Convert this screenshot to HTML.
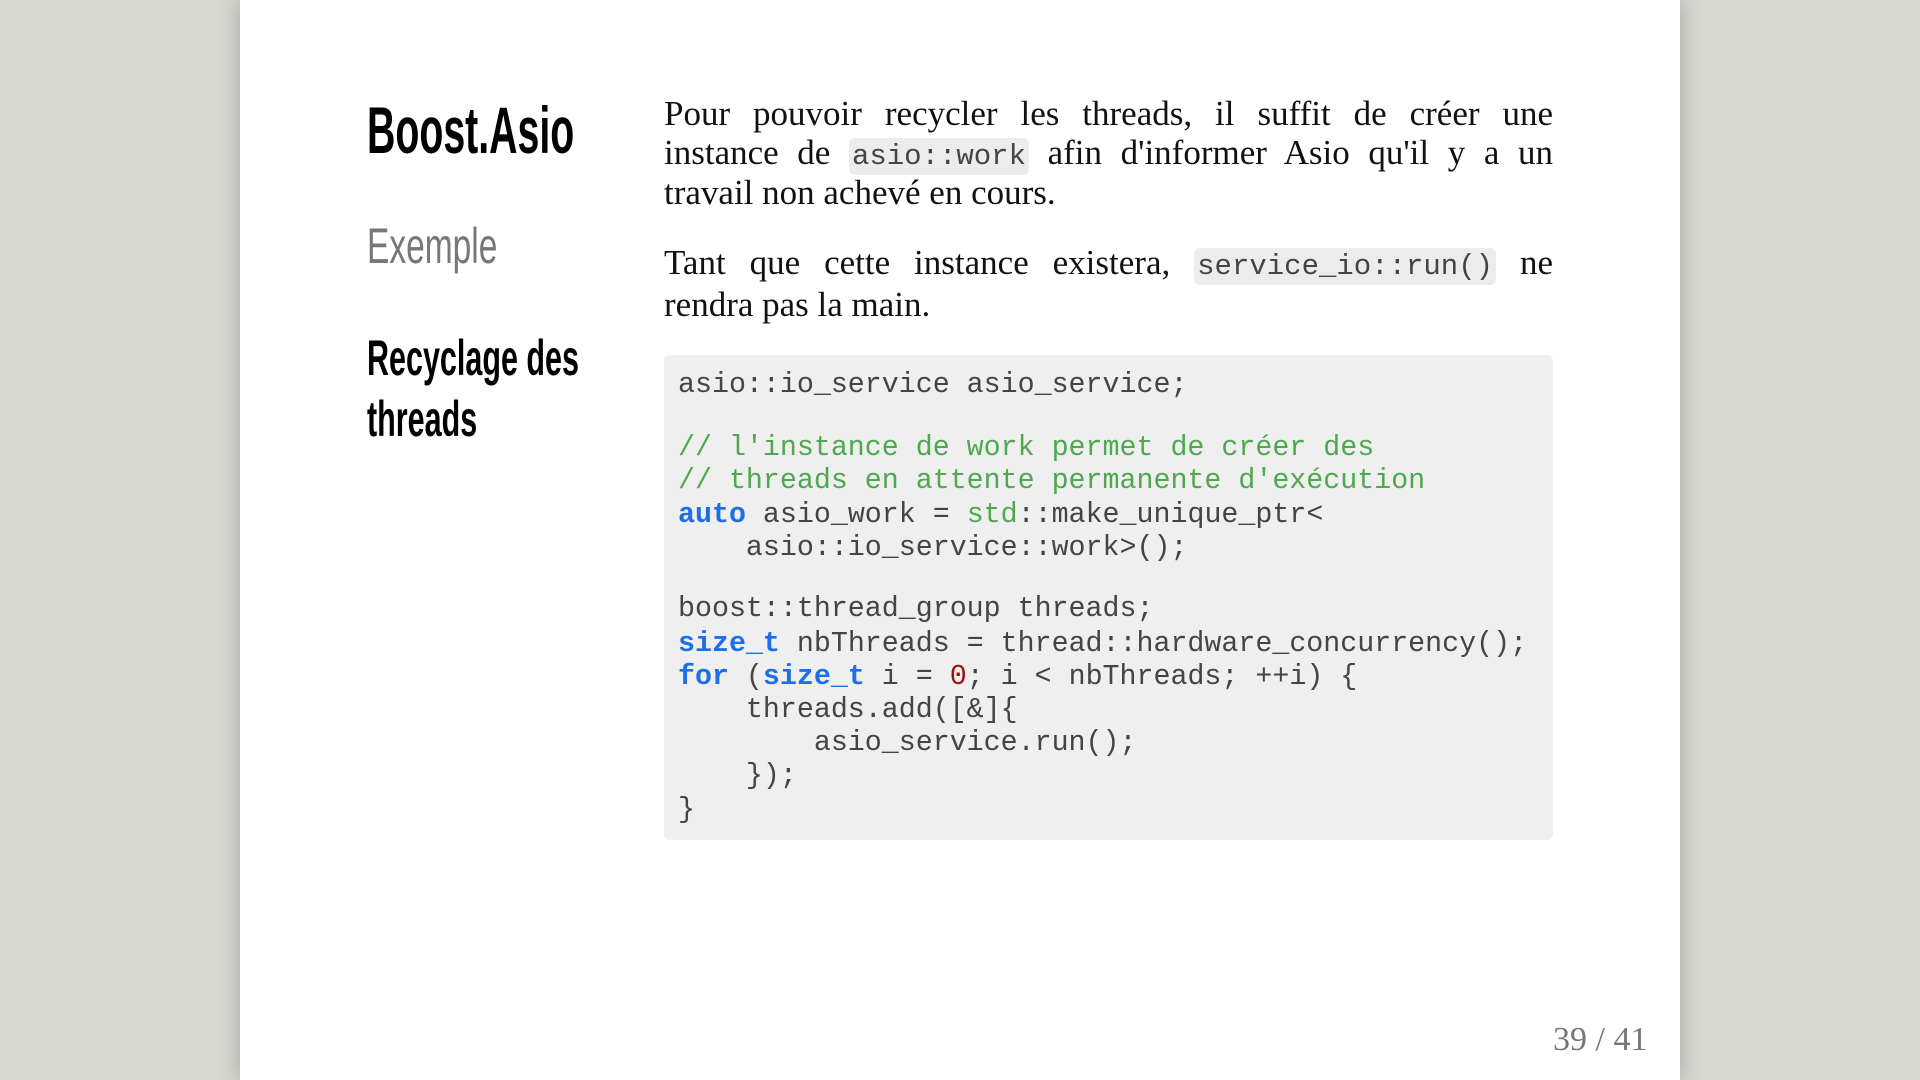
<!DOCTYPE html>
<html><head><meta charset="utf-8"><style>
html,body{margin:0;padding:0;width:1920px;height:1080px;overflow:hidden;background:#d7d8d2;}
.slide{position:absolute;left:240px;top:0;width:1440px;height:1080px;background:#fff;box-shadow:0 0 20px rgba(0,0,0,.25);}
.h{position:absolute;font-family:"Liberation Sans Narrow","Liberation Sans",sans-serif;transform-origin:left top;white-space:nowrap;}
.t{position:absolute;left:664px;width:889px;font-family:"Liberation Serif",serif;font-size:35px;color:#111;line-height:40px;white-space:nowrap;}
.j{text-align:justify;text-align-last:justify;white-space:normal;}
.ic{font-family:"Liberation Mono",monospace;font-size:29px;color:#444;background:#ececec;border-radius:6px;padding:2px 3px;}
.code{position:absolute;left:664px;top:355px;width:889px;height:485px;background:#efefef;border-radius:6px;}
.l{position:absolute;left:14px;font-family:"Liberation Mono",monospace;font-size:28.3px;color:#444;white-space:pre;line-height:34px;}
.c{color:#4ea84e}.k{color:#1d6fe8;font-weight:bold}.n{color:#a01010}
</style></head><body>
<div class="slide"></div>
<div class="h" style="left:367px;top:92px;font-size:66px;font-weight:bold;color:#000;transform:scaleX(0.595)">Boost.Asio</div>
<div class="h" style="left:367px;top:217px;font-size:50px;color:#777;transform:scaleX(0.67)">Exemple</div>
<div class="h" style="left:367px;top:328px;font-size:50px;font-weight:bold;color:#000;transform:scaleX(0.61);line-height:61px">Recyclage des<br>threads</div>

<div class="t j" style="top:94px">Pour pouvoir recycler les threads, il suffit de créer une</div>
<div class="t j" style="top:133px">instance de <span class="ic">asio::work</span> afin d'informer Asio qu'il y a un</div>
<div class="t" style="top:173px">travail non achevé en cours.</div>
<div class="t j" style="top:243px">Tant que cette instance existera, <span class="ic">service_io::run()</span> ne</div>
<div class="t" style="top:285px">rendra pas la main.</div>

<div class="code">
<div class="l" style="top:13px">asio::io_service asio_service;</div>
<div class="l" style="top:76px"><span class="c">// l'instance de work permet de créer des</span></div>
<div class="l" style="top:109px"><span class="c">// threads en attente permanente d'exécution</span></div>
<div class="l" style="top:143px"><span class="k">auto</span> asio_work = <span class="c">std</span>::make_unique_ptr&lt;</div>
<div class="l" style="top:176px">    asio::io_service::work&gt;();</div>
<div class="l" style="top:237px">boost::thread_group threads;</div>
<div class="l" style="top:272px"><span class="k">size_t</span> nbThreads = thread::hardware_concurrency();</div>
<div class="l" style="top:305px"><span class="k">for</span> (<span class="k">size_t</span> i = <span class="n">0</span>; i &lt; nbThreads; ++i) {</div>
<div class="l" style="top:338px">    threads.add([&amp;]{</div>
<div class="l" style="top:371px">        asio_service.run();</div>
<div class="l" style="top:404px">    });</div>
<div class="l" style="top:438px">}</div>
</div>

<div style="position:absolute;left:1553px;top:1021px;font-family:'Liberation Serif',serif;font-size:34px;color:#777;">39 / 41</div>
</body></html>
